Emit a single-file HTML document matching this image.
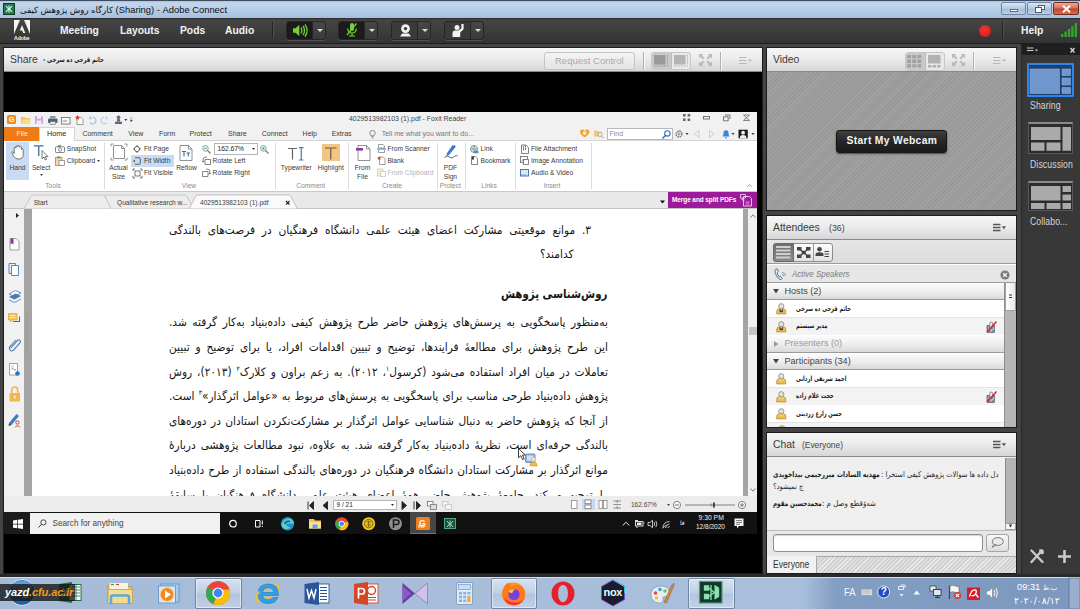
<!DOCTYPE html>
<html lang="fa">
<head>
<meta charset="utf-8">
<title>Adobe Connect</title>
<style>
*{box-sizing:border-box;margin:0;padding:0}
html,body{width:1080px;height:609px;overflow:hidden;background:#444}
body{position:relative;font-family:"Liberation Sans","DejaVu Sans",sans-serif;font-size:12px;color:#222}
.a{position:absolute}
.t{position:absolute;white-space:nowrap;line-height:1}
svg{position:absolute;overflow:visible}
/* ---------- window title bar ---------- */
#wtitle{left:0;top:0;width:1080px;height:18px;background:linear-gradient(#a9c0dd 0,#c4d6ec 12%,#b3cbe6 60%,#a4bfdf 100%);border-top:1px solid #3f4d60}
#wtitle .txt{left:20px;top:3.5px;font-size:9.4px;color:#111;direction:ltr}
.wbtn{top:1px;height:13px;border:1px solid #6f87a6;border-radius:2px;background:linear-gradient(#dbe7f4,#b4c8e0 50%,#a3bad6 51%,#bccfe6)}
/* ---------- connect menu bar ---------- */
#mbar{left:0;top:18px;width:1080px;height:26px;background:linear-gradient(#2a2a2a 0,#454545 8%,#3b3b3b 60%,#333 100%);border-bottom:1px solid #1d1d1d}
#mbar .m{top:7.5px;font-size:10.3px;font-weight:bold;color:#f2f2f2}
.vsep{top:3.500px;width:2px;height:16.500px;background:#232323;border-right:1px solid #505050}
.mb{top:2.8px;width:40px;height:19px;border-radius:3px;background:linear-gradient(#474747,#3a3a3a);border:1px solid #262626;box-shadow:0 1px 0 #505050}
.mb i{position:absolute;left:0;top:0;bottom:0;width:26px;background:#1b1b1b;border-radius:2px 0 0 2px;border-right:1px solid #262626}
.mb b{position:absolute;left:30px;top:7px;width:0;height:0;border:3px solid transparent;border-top:3.5px solid #ddd;border-bottom:0}
/* ---------- pods ---------- */
.pod{background:#000;box-shadow:0 0 0 1px #1c1c1c}
.phead{height:24px;background:linear-gradient(#f6f6f6,#ececec 45%,#d6d6d6);border-bottom:1px solid #8a8a8a}
.ptitle{font-size:10.400px;color:#3a3a3a;margin-top:.5px}
.hsep{width:1px;height:18px;background:#b0b0b0;box-shadow:1px 0 0 #f8f8f8}
.tog{width:40px;height:18px;border:1px solid #c6c6c6;border-radius:3px;background:#e9e9e9}
.tog i{position:absolute;left:0;top:0;bottom:0;width:20px;background:#c9c9c9;border-right:1px solid #bdbdbd;border-radius:2px 0 0 2px}
.hatch{background:#999 repeating-linear-gradient(135deg,rgba(255,255,255,.10) 0,rgba(255,255,255,.10) 1px,transparent 1px,transparent 3px)}

/* ---------- foxit ---------- */
.r{position:absolute;white-space:nowrap;line-height:1;font-size:6.7px;color:#3a3a3a;margin-top:.9px}
.rc{position:absolute;white-space:nowrap;line-height:1;font-size:6.7px;color:#3a3a3a;transform:translateX(-50%);margin-top:.9px}
.g{color:#8a8a8a}
.rsep{position:absolute;top:143px;width:1px;height:46px;background:#dcdcdc}
.dl{position:absolute;direction:rtl;font-family:"DejaVu Sans",sans-serif;color:#151515;line-height:1.6;height:1.6em;white-space:nowrap;text-align:justify;text-align-last:justify;transform-origin:0 0;overflow:visible}
.dl sup{font-size:58%;line-height:0;vertical-align:.75em}
.nm{font-family:"DejaVu Sans Condensed","DejaVu Sans",sans-serif;font-size:7.200px;font-weight:bold;color:#1c1c1c;transform:scaleX(.79);transform-origin:0 0}
.cn{font-family:"DejaVu Sans Condensed","DejaVu Sans",sans-serif;font-size:7.800px;font-weight:bold;color:#1c1c1c;transform:scaleX(.83);transform-origin:0 0}
.cm{font-family:"DejaVu Sans Condensed","DejaVu Sans",sans-serif;font-size:7.800px;color:#2a2a2a;transform:scaleX(.96);transform-origin:0 0}
.lb{font-size:10px;color:#d6d6d6;transform:scaleX(.87);transform-origin:0 0;letter-spacing:.1px}
.tb{top:578px;height:31px;border:1px solid #6f86a6;border-radius:2px;background:linear-gradient(rgba(255,255,255,.55),rgba(255,255,255,.28) 48%,rgba(255,255,255,.12) 52%,rgba(255,255,255,.30));box-shadow:inset 0 0 0 1px rgba(255,255,255,.5)}
</style>
</head>
<body>

<!-- ======= Windows title bar ======= -->
<div id="wtitle" class="a">
  <div class="a" style="left:3px;top:2px;width:12px;height:12px;background:#1f7a50;border:1px solid #0c3a25"></div>
  <svg style="left:4px;top:3px" width="10" height="10" viewBox="0 0 10 10"><path d="M2 2L4.5 5L2 8M8 2L5.5 5L8 8M5 1.5V8.5" stroke="#e8f5ee" stroke-width="1.1" fill="none"/></svg>
  <div class="t txt"><span dir="rtl" style="font-size:8.6px">کارگاه روش پژوهش کیفی</span> (Sharing) - Adobe Connect</div>
  <div class="a wbtn" style="left:1001px;width:25px"><div class="a" style="left:8px;top:6px;width:8px;height:3px;background:#fff;border:1px solid #5b6c85"></div></div>
  <div class="a wbtn" style="left:1027px;width:25px"><div class="a" style="left:10px;top:2px;width:7px;height:5px;border:1px solid #4b5c75;background:#fff"></div><div class="a" style="left:7px;top:4px;width:7px;height:6px;border:1px solid #4b5c75;background:#fff"></div></div>
  <div class="a wbtn" style="left:1053px;width:26px;background:linear-gradient(#eaa998,#d66f5b 48%,#c4432d 52%,#d9694b);border-color:#6d3029"><svg style="left:8px;top:2px" width="9" height="8" viewBox="0 0 9 8"><path d="M1 .8L8 7.2M8 .8L1 7.2" stroke="#fff" stroke-width="2"/></svg></div>
</div>

<!-- ======= Adobe Connect menu bar ======= -->
<div id="mbar" class="a">
  <svg style="left:14px;top:2px" width="16" height="14" viewBox="0 0 16 14"><path d="M0 0H6L0 14ZM16 0H10L16 14ZM8 5L11.3 13H9.2L8.2 10.5H5.8Z" fill="#f4f4f4"/></svg>
  <div class="t" style="left:14px;top:18px;font-size:5.2px;font-weight:bold;color:#f4f4f4;letter-spacing:-.1px">Adobe</div>
  <div class="t m" style="left:60px">Meeting</div>
  <div class="t m" style="left:120px">Layouts</div>
  <div class="t m" style="left:180px">Pods</div>
  <div class="t m" style="left:225px">Audio</div>
  <div class="a vsep" style="left:272px"></div>
  <div class="a mb" style="left:286px"><i></i><b></b>
    <svg style="left:6px;top:2px" width="15" height="13" viewBox="0 0 15 13"><path d="M0 4.3H2.6L6.3.8V12.2L2.6 8.7H0Z" fill="#74cf3c"/><path d="M8 3.6Q9.8 6.5 8 9.4M10 1.9Q13.2 6.5 10 11.1M12 .5Q16.3 6.5 12 12.5" stroke="#74cf3c" stroke-width="1.3" fill="none"/></svg></div>
  <div class="a mb" style="left:338px"><i></i><b></b>
    <svg style="left:7px;top:1.5px" width="12" height="14" viewBox="0 0 12 14"><rect x="4" y="0" width="4" height="8" rx="2" fill="#74cf3c"/><path d="M1.8 5.5Q1.8 10 6 10Q10.2 10 10.2 5.5M6 10V13M3 13H9" stroke="#74cf3c" stroke-width="1.2" fill="none"/><path d="M10.5 .5L1 12" stroke="#74cf3c" stroke-width="1.2"/></svg></div>
  <div class="a mb" style="left:391px"><i style="background:#3a3a3a"></i><b></b>
    <svg style="left:7px;top:2px" width="13" height="13" viewBox="0 0 13 13"><circle cx="6.5" cy="4.6" r="4.4" fill="#f2f2f2"/><circle cx="6.5" cy="4.6" r="1.7" fill="#3a3a3a"/><path d="M3.2 9.4H9.8L12 12.5H1Z" fill="#f2f2f2"/></svg></div>
  <div class="a mb" style="left:444px"><i style="background:#3a3a3a"></i><b></b>
    <svg style="left:6px;top:1px" width="15" height="15" viewBox="0 0 15 15"><circle cx="6" cy="4.6" r="2.5" fill="#f2f2f2"/><path d="M1.5 14V10.2Q1.5 7.6 4.2 7.6H7.6L10.4 5.2V1H12.6V6.2L9.2 9.6V14Z" fill="#f2f2f2"/></svg></div>
  <div class="a" style="left:978.500px;top:6.800px;width:12.200px;height:12.200px;border-radius:50%;background:radial-gradient(circle at 45% 40%,#f03a33,#d81f1f 70%,#b81515)"></div>
  <div class="a vsep" style="left:1002px"></div>
  <div class="t m" style="left:1021px">Help</div>
  <svg style="left:1060px;top:5px" width="18" height="14" viewBox="0 0 18 14"><path d="M1 11H3.4V14H1ZM4.4 8.6H6.8V14H4.4ZM7.8 6H10.2V14H7.8ZM11.2 3.2H13.6V14H11.2ZM14.6 0H17V14H14.6Z" fill="#35a42e"/></svg>
</div>

<!-- ======= Share pod ======= -->
<div class="a pod" style="left:4px;top:48px;width:758px;height:525px"></div>
<div class="a phead" style="left:4px;top:48px;width:758px"></div>
<div class="t ptitle" style="left:10px;top:54.5px">Share</div>
<div class="t" style="left:43px;top:56.5px;font-family:'DejaVu Sans Condensed','DejaVu Sans',sans-serif;font-size:7px;font-weight:bold;color:#222;direction:ltr;transform:scaleX(.84);transform-origin:0 0">- <span dir="rtl">حاتم قرجی ده سرخی</span></div>
<div class="a" style="left:544px;top:52px;width:91px;height:17.5px;border:1px solid #c4c4c4;border-radius:3px;background:linear-gradient(#f4f4f4,#e4e4e4)"></div>
<div class="t" style="left:555px;top:55.5px;font-size:9.5px;color:#a9a9a9">Request Control</div>
<div class="a hsep" style="left:643px;top:52px"></div>
<div class="a tog" style="left:651px;top:52px"><i></i></div>
<svg style="left:654px;top:55px" width="34" height="12" viewBox="0 0 34 12"><rect x="0" y="0" width="11.5" height="9.5" fill="#9a9a9a"/><path d="M13.5 0V12M0 11H12" stroke="#9a9a9a" stroke-width="1" stroke-dasharray="1.5 1"/><rect x="20" y="0" width="11.5" height="9.5" fill="#b4b4b4"/><path d="M33.5 0V12M20 11H32" stroke="#b4b4b4" stroke-width="1" stroke-dasharray="1.5 1"/></svg>
<svg class="fs" style="left:699px;top:54px" width="13" height="12" viewBox="0 0 13 12"><path d="M0 0H4.5L3 1.5L5.5 4L4 5.5L1.5 3L0 4.5ZM13 0V4.5L11.5 3L9 5.5L7.5 4L10 1.5L8.5 0ZM0 12V7.5L1.5 9L4 6.5L5.5 8L3 10.5L4.5 12ZM13 12H8.5L10 10.5L7.5 8L9 6.5L11.5 9L13 7.5Z" fill="#bcbcbc"/></svg>
<div class="a hsep" style="left:720px;top:52px"></div>
<svg style="left:739px;top:57px" width="13" height="7" viewBox="0 0 13 7"><path d="M0 .5H7.5M0 3.5H7.5M0 6.5H7.5" stroke="#b8b8b8" stroke-width="1"/><path d="M9 2.5H13L11 5Z" fill="#b8b8b8"/></svg>

<!-- ======= Shared screen (Foxit Reader on Windows 10) ======= -->
<div id="scr" class="a" style="left:4px;top:112px;width:753px;height:422px;background:#fff;overflow:hidden"></div>

<!-- foxit: quick access + tabs -->
<div class="a" style="left:4px;top:112px;width:753px;height:29px;background:#f1f1f1;border-bottom:1px solid #d4d4d4"></div>
<div class="a" style="left:7px;top:115px;width:9px;height:9px;border-radius:1.5px;background:#f08a1c"></div>
<div class="t" style="left:9px;top:116px;font-size:7px;font-weight:bold;color:#fff">G</div>
<svg style="left:21px;top:115px" width="112" height="10" viewBox="0 0 112 10">
 <path d="M0 2H3.5L4.5 3H9V9H0Z" fill="#f4c44e"/><path d="M1.5 4.5H10L8.5 9H0Z" fill="#f8dc8c"/>
 <path d="M14 1H21L22 2V9H14Z" fill="#c9a8dc"/><rect x="16" y="1" width="4" height="2.6" fill="#f4f0f8"/><rect x="15.5" y="5.5" width="5" height="3.5" fill="#efe6f6"/>
 <rect x="27" y="3.5" width="9.5" height="4.5" rx="1" fill="#55606e"/><rect x="29" y="1" width="5.5" height="2.5" fill="#8b96a5"/><rect x="29" y="6.5" width="5.5" height="3" fill="#dfe3e8" stroke="#55606e" stroke-width=".5"/>
 <rect x="40.5" y="2.5" width="8.5" height="6.5" fill="#fafafa" stroke="#6a6a6a" stroke-width=".8"/><path d="M42 6H46" stroke="#6a6a6a" stroke-width=".8"/>
 <path d="M56 2.5H60.5L62 4V9.5H56Z" fill="#fff" stroke="#777" stroke-width=".7"/><path d="M56.5 0L57.3 1.6L59 1.9L57.7 3L58 4.7L56.5 3.9L55 4.7L55.3 3L54 1.9L55.7 1.6Z" fill="#e0341f"/>
 <path d="M69 7.5A3.3 3.3 0 1 0 72 2.2" fill="none" stroke="#a6c6ea" stroke-width="1.3"/><path d="M67.2 3.8L70.2 .8L70.8 4.6Z" fill="#a6c6ea"/>
 <path d="M86 7.5A3.3 3.3 0 1 1 83 2.2" fill="none" stroke="#bdd3ec" stroke-width="1.3"/><path d="M87.8 3.8L84.8 .8L84.2 4.6Z" fill="#bdd3ec"/>
 <circle cx="97.5" cy="2.3" r="1.8" fill="#5d6b7c"/><path d="M96.3 3.5H98.7L99.3 6.5H95.7ZM94 6.7H101V9H94Z" fill="#5d6b7c"/>
 <path d="M103.3 4H106.3L104.8 6Z" fill="#333"/><path d="M109.3 3H111.3M109.3 5H111.3L110.3 6.8Z" fill="#444" stroke="#444" stroke-width=".5"/>
</svg>
<div class="r" style="left:349px;top:115.5px;font-size:6.9px;color:#444">4029513982103 (1).pdf - Foxit Reader</div>
<svg style="left:683px;top:114px" width="68" height="8" viewBox="0 0 68 8"><path d="M0 0H2.6V2.6H0ZM4.6 0H7.2V2.6H4.6ZM0 4.4H2.6V7H0ZM4.6 4.4H7.2V7H4.6Z" fill="#666"/><rect x="20.5" y="2.5" width="6" height="2.5" fill="none" stroke="#666" stroke-width=".9"/><path d="M42 1H47V5M40.5 2.8H45.2V6.8H40.5Z" fill="none" stroke="#666" stroke-width=".9"/><path d="M60.5 1L66.5 6.5M66.5 1L60.5 6.5M60.5 1H66.5M60.5 6.5H66.5" stroke="#666" stroke-width=".8" fill="none"/></svg>
<div class="a" style="left:4px;top:127px;width:35px;height:13.5px;background:#ef7b14"></div>
<div class="r" style="left:16.5px;top:129.2px;font-size:7px;color:#ffe9d3">File</div>
<div class="a" style="left:39px;top:127px;width:36px;height:14.5px;background:#fff;border:1px solid #d4d4d4;border-bottom:0"></div>
<div class="r" style="left:47px;top:129.2px;font-size:7.2px;color:#222">Home</div>
<div class="r" style="left:82.4px;top:129.2px;font-size:7px">Comment</div>
<div class="r" style="left:128.3px;top:129.2px;font-size:7px">View</div>
<div class="r" style="left:158.9px;top:129.2px;font-size:7px">Form</div>
<div class="r" style="left:189.6px;top:129.2px;font-size:7px">Protect</div>
<div class="r" style="left:228px;top:129.2px;font-size:7px">Share</div>
<div class="r" style="left:261.7px;top:129.2px;font-size:7px">Connect</div>
<div class="r" style="left:302.6px;top:129.2px;font-size:7px">Help</div>
<div class="r" style="left:331.7px;top:129.2px;font-size:7px">Extras</div>
<svg style="left:368.5px;top:129.5px" width="7" height="9" viewBox="0 0 7 9"><circle cx="3.5" cy="3.2" r="2.7" fill="none" stroke="#777" stroke-width=".8"/><path d="M2.4 6.5H4.6M2.7 8H4.3" stroke="#777" stroke-width=".8"/></svg>
<div class="r g" style="left:381.7px;top:129.2px;font-size:7px;color:#777">Tell me what you want to do...</div>
<svg style="left:580px;top:129px" width="24" height="9" viewBox="0 0 24 9"><path d="M4.7 8.4C1 6 0 4.4 0 2.8C0 .6 3.2-.4 4.7 1.9C6.200-.4 9.400 .6 9.400 2.800C9.400 4.400 8.400 6 4.700 8.400Z" fill="#f3a033"/><circle cx="4.700" cy="4" r="1.900" fill="#fde8c8"/><path d="M14 1.500H17L17.800 2.500H21.500V7.500H14Z" fill="#f2c77a"/><circle cx="20" cy="5.500" r="2" fill="#f7f2ea" stroke="#999" stroke-width=".7"/><path d="M21.500 7L23.500 9" stroke="#999" stroke-width=".9"/></svg>
<div class="a" style="left:606.5px;top:127.5px;width:66.5px;height:12px;background:#fff;border:1px solid #b9b9b9"></div>
<div class="r g" style="left:609.5px;top:129.2px;font-size:7px;color:#8d8d8d">Find</div>
<svg style="left:662px;top:129.5px" width="9" height="9" viewBox="0 0 9 9"><circle cx="5.400" cy="3.400" r="2.700" fill="none" stroke="#2f74c4" stroke-width="1.100"/><path d="M3.400 5.500L.5 8.500" stroke="#2f74c4" stroke-width="1.500"/></svg>
<svg style="left:675px;top:129px" width="82" height="10" viewBox="0 0 82 10"><circle cx="4" cy="5" r="3" fill="none" stroke="#6f6f6f" stroke-width="1.300" stroke-dasharray="1.600 .75"/><circle cx="4" cy="5" r="1.100" fill="none" stroke="#6f6f6f" stroke-width=".7"/><path d="M10.500 4H13.500L12 6Z" fill="#333"/><path d="M24 1.500V8.500L19.500 5Z" fill="none" stroke="#c6c6c6" stroke-width=".8"/><path d="M34.500 1.500V8.500L39 5Z" fill="none" stroke="#c6c6c6" stroke-width=".8"/><path d="M47.500 7.500Q48.500 6 48.500 4Q48.500 1.200 51 1.200Q53.500 1.200 53.500 4Q53.500 6 54.500 7.500ZM50 8.300H52V9.300H50Z" fill="#3c86d8"/><path d="M56.500 4H59.500L58 6Z" fill="#333"/><rect x="63.500" y=".7" width="9.300" height="8.600" fill="#1c1c1c"/><circle cx="68.100" cy="3.700" r="1.900" fill="#f1f1f1"/><path d="M64.800 9.300Q64.800 6 68.100 6Q71.400 6 71.400 9.300Z" fill="#f1f1f1"/><path d="M76.500 4H79.500L78 6Z" fill="#333"/></svg>

<!-- foxit: ribbon -->
<div class="a" style="left:4px;top:141px;width:753px;height:50.5px;background:#fff;border-bottom:1px solid #c9c9c9"></div>
<div class="a" style="left:6px;top:142px;width:23px;height:38px;background:#c8dbf2"></div>
<svg style="left:10.500px;top:145px" width="14" height="15" viewBox="0 0 14 15"><path d="M3.200 8.500V3.200Q3.200 2.200 4.100 2.200Q5 2.200 5 3.200V1.700Q5 .7 5.900 .7Q6.800 .7 6.800 1.700V1.400Q6.800 .5 7.700 .5Q8.600 .5 8.600 1.400V2.300Q8.600 1.500 9.500 1.500Q10.400 1.500 10.400 2.400V4.500Q10.400 3.700 11.300 3.700Q12.200 3.700 12.200 4.600V9.500Q12.200 14 8 14H7Q4.500 14 3 11.500L1 8.200Q.5 7.200 1.400 6.900Q2.200 6.700 3.200 8.500Z" fill="#fff" stroke="#555" stroke-width=".8"/></svg>
<div class="rc" style="left:17.500px;top:164px">Hand</div>
<svg style="left:34px;top:145px" width="15" height="16" viewBox="0 0 15 16"><path d="M0 .8H9.500M4.750 .8V11" stroke="#3a6ea5" stroke-width="1.300" fill="none"/><path d="M8 5.500V14L10 12L11.300 15L12.500 14.500L11.200 11.600H14Z" fill="#fff" stroke="#444" stroke-width=".7"/></svg>
<div class="rc" style="left:41.200px;top:164px">Select</div>
<svg style="left:39.700px;top:173.500px" width="3" height="2" viewBox="0 0 3 2"><path d="M0 0H3L1.500 2Z" fill="#444"/></svg>
<svg style="left:55px;top:144.500px" width="10" height="8" viewBox="0 0 10 8"><rect x=".5" y="1.800" width="9" height="5.700" rx=".8" fill="none" stroke="#666" stroke-width=".8"/><rect x="3" y=".3" width="3" height="1.500" fill="#666"/><circle cx="5" cy="4.600" r="1.600" fill="none" stroke="#666" stroke-width=".7"/></svg>
<div class="r" style="left:66.700px;top:145.200px">SnapShot</div>
<svg style="left:55px;top:155.500px" width="10" height="10" viewBox="0 0 10 10"><rect x=".5" y="1.500" width="6.500" height="8" fill="#f1d9a8" stroke="#b8893a" stroke-width=".8"/><rect x="2.200" y=".3" width="3" height="2" fill="#888"/><rect x="4" y="4.500" width="5.500" height="5" fill="#fff" stroke="#777" stroke-width=".7"/></svg>
<div class="r" style="left:66.700px;top:157.200px">Clipboard</div>
<svg style="left:96.500px;top:160px" width="3" height="2" viewBox="0 0 3 2"><path d="M0 0H3L1.500 2Z" fill="#444"/></svg>
<div class="rc g" style="left:53px;top:182.200px">Tools</div>
<div class="rsep" style="left:103.500px"></div>
<svg style="left:110.500px;top:144px" width="16" height="16" viewBox="0 0 16 16"><path d="M2.500 1.500H10.500L13.500 4.500V14.500H2.500Z" fill="#fff" stroke="#777" stroke-width=".8"/><path d="M10.500 1.500V4.500H13.500" fill="none" stroke="#777" stroke-width=".8"/><path d="M0 2.500V0H2.500M16 2.500V0H13.500M0 13.500V16H2.500M16 13.500V16H13.500" stroke="#888" stroke-width=".9" fill="none"/></svg>
<div class="rc" style="left:118.500px;top:164px">Actual</div>
<div class="rc" style="left:118.500px;top:172.700px">Size</div>
<svg style="left:133px;top:144.500px" width="8" height="8" viewBox="0 0 8 8"><circle cx="4" cy="4" r="2.600" fill="none" stroke="#555" stroke-width=".9"/><path d="M4 0V1.400M4 6.600V8M0 4H1.400M6.600 4H8" stroke="#555" stroke-width=".9"/></svg>
<div class="r" style="left:144px;top:145.200px">Fit Page</div>
<div class="a" style="left:131px;top:154.500px;width:43px;height:12px;background:#c8dbf2"></div>
<svg style="left:133px;top:156.500px" width="8" height="8" viewBox="0 0 8 8"><path d="M2 .7H6Q7.300 .7 7.300 2V6Q7.300 7.300 6 7.300H2" fill="none" stroke="#555" stroke-width=".9"/><path d="M0 4L2 2.500V5.500Z" fill="#555"/></svg>
<div class="r" style="left:144px;top:157.200px">Fit Width</div>
<svg style="left:133px;top:168.500px" width="9" height="9" viewBox="0 0 9 9"><rect x="2" y="2" width="5" height="5" fill="none" stroke="#555" stroke-width=".8"/><path d="M0 2V0H2M9 2V0H7M0 7V9H2M9 7V9H7" stroke="#555" stroke-width=".8" fill="none"/></svg>
<div class="r" style="left:144px;top:169.300px">Fit Visible</div>
<svg style="left:179px;top:144.500px" width="14" height="16" viewBox="0 0 14 16"><path d="M1 .5H9.500L13 4V15.500H1Z" fill="#fff" stroke="#777" stroke-width=".8"/><path d="M9.500 .5V4H13" fill="none" stroke="#777" stroke-width=".8"/><path d="M3 6.500H7M5 6.500V11.500M7.500 8H11M9.250 8V11.500" stroke="#3a6ea5" stroke-width="1.100" fill="none"/></svg>
<div class="rc" style="left:186.500px;top:164px">Reflow</div>
<svg style="left:202px;top:144.500px" width="9" height="9" viewBox="0 0 9 9"><circle cx="3.400" cy="3.400" r="2.800" fill="#eef7f0" stroke="#5a9a74" stroke-width=".8"/><path d="M2 3.400H4.800" stroke="#5a9a74" stroke-width=".8"/><path d="M5.500 5.500L8.500 8.500" stroke="#777" stroke-width="1.200"/></svg>
<div class="a" style="left:214px;top:143px;width:43.500px;height:11.800px;background:#fff;border:1px solid #b5b5b5"></div>
<div class="r" style="left:217.500px;top:145.400px;color:#222">162.67%</div>
<svg style="left:251.500px;top:147.500px" width="3" height="2" viewBox="0 0 3 2"><path d="M0 0H3L1.500 2Z" fill="#333"/></svg>
<svg style="left:260px;top:144.500px" width="9" height="9" viewBox="0 0 9 9"><circle cx="3.400" cy="3.400" r="2.800" fill="#eef7f0" stroke="#5a9a74" stroke-width=".8"/><path d="M2 3.400H4.800M3.400 2V4.800" stroke="#5a9a74" stroke-width=".8"/><path d="M5.500 5.500L8.500 8.500" stroke="#777" stroke-width="1.200"/></svg>
<svg style="left:202px;top:156px" width="9" height="9" viewBox="0 0 9 9"><path d="M3 3.500H8.500V8.500H3Z" fill="#fff" stroke="#666" stroke-width=".8"/><path d="M1.200 6V3.200Q1.200 1.200 3.500 1.200H5" fill="none" stroke="#666" stroke-width=".8"/><path d="M0 5L1.200 6.800L2.400 5Z" fill="#666"/></svg>
<div class="r" style="left:212.600px;top:157.200px">Rotate Left</div>
<svg style="left:202px;top:168px" width="9" height="9" viewBox="0 0 9 9"><path d="M.5 3.500H6V8.500H.5Z" fill="#fff" stroke="#666" stroke-width=".8"/><path d="M7.800 6V3.200Q7.800 1.200 5.500 1.200H4" fill="none" stroke="#666" stroke-width=".8"/><path d="M6.600 5L7.800 6.800L9 5Z" fill="#666"/></svg>
<div class="r" style="left:212.600px;top:169.300px">Rotate Right</div>
<div class="rc g" style="left:189px;top:182.200px">View</div>
<div class="rsep" style="left:274.500px"></div>
<svg style="left:288px;top:146.500px" width="17" height="14" viewBox="0 0 17 14"><path d="M0 1.500H9M4.500 1.500V12.500" stroke="#666" stroke-width="1.200" fill="none"/><path d="M11 .6H15.500M11 13H15.500M13.250 .6V13" stroke="#3b7cc4" stroke-width="1.200" fill="none"/></svg>
<div class="rc" style="left:296.300px;top:164px">Typewriter</div>
<div class="a" style="left:321.800px;top:144px;width:18px;height:17px;background:#f3c582"></div>
<svg style="left:325px;top:146.500px" width="12" height="13" viewBox="0 0 12 13"><path d="M0 1H11.500M5.750 1V12.500" stroke="#6a5a45" stroke-width="1.200" fill="none"/></svg>
<div class="rc" style="left:330.800px;top:164px">Highlight</div>
<div class="rc g" style="left:310.700px;top:182.200px">Comment</div>
<div class="rsep" style="left:348.300px"></div>
<svg style="left:355.500px;top:144.500px" width="15" height="16" viewBox="0 0 15 16"><path d="M2 .5H10.500L14 4V15.500H2Z" fill="#fff" stroke="#777" stroke-width=".8"/><path d="M10.500 .5V4H14" fill="none" stroke="#777" stroke-width=".8"/><rect x="0" y="3" width="7" height="2.600" fill="#8a3aa8"/></svg>
<div class="rc" style="left:362.500px;top:164px">From</div>
<div class="rc" style="left:362.500px;top:172.700px">File</div>
<svg style="left:377px;top:144px" width="9" height="9" viewBox="0 0 9 9"><path d="M1.500 .5H6L7.500 2V4H1.500Z" fill="#fff" stroke="#777" stroke-width=".7"/><path d="M0 5H9" stroke="#3b7cc4" stroke-width="1"/><path d="M1.500 6V8.500H7.500V6" fill="none" stroke="#777" stroke-width=".7"/></svg>
<div class="r" style="left:387.400px;top:145.200px">From Scanner</div>
<svg style="left:377px;top:156px" width="9" height="9" viewBox="0 0 9 9"><path d="M2.500 1H6.500L8 2.500V8.500H2.500Z" fill="#fff" stroke="#777" stroke-width=".7"/><path d="M2.200 0L2.800 1.400L4.300 1.600L3.200 2.600L3.500 4L2.200 3.300L.9 4L1.200 2.600L.1 1.600L1.600 1.400Z" fill="#e0341f"/></svg>
<div class="r" style="left:387.400px;top:157.200px">Blank</div>
<svg style="left:377px;top:168px" width="9" height="9" viewBox="0 0 9 9" opacity=".45"><rect x=".5" y="1" width="5.500" height="7" fill="#f1d9a8" stroke="#b8893a" stroke-width=".7"/><rect x="3.500" y="3.500" width="5" height="5" fill="#fff" stroke="#777" stroke-width=".7"/></svg>
<div class="r" style="left:387.400px;top:169.300px;color:#b4b4b4">From Clipboard</div>
<div class="rc g" style="left:392px;top:182.200px">Create</div>
<div class="rsep" style="left:436.500px"></div>
<svg style="left:444px;top:144.500px" width="14" height="16" viewBox="0 0 14 16"><path d="M8.500 0L11.500 2L5 10L2.500 11L3 8.200Z" fill="#3b7cc4"/><path d="M9.800 .8L11.300 1.800" stroke="#1d4f8c" stroke-width="1.200"/><path d="M.5 12.500Q3 9.500 5.500 12Q8 14.500 10.500 11.500Q12 10 13.500 11" fill="none" stroke="#3a5a8a" stroke-width=".9"/></svg>
<div class="rc" style="left:450.400px;top:164px">PDF</div>
<div class="rc" style="left:450.400px;top:172.700px">Sign</div>
<div class="rc g" style="left:450.400px;top:182.200px">Protect</div>
<div class="rsep" style="left:464.500px"></div>
<svg style="left:469.500px;top:144.500px" width="9" height="9" viewBox="0 0 9 9"><circle cx="4" cy="4" r="3.500" fill="#eaf4ee" stroke="#5a8a74" stroke-width=".8"/><path d="M.5 4H7.500M4 .5Q1.500 4 4 7.500M4 .5Q6.500 4 4 7.500" fill="none" stroke="#5a8a74" stroke-width=".6"/><path d="M4.500 6.200H8.500M4.500 7.800H8.500" stroke="#3b6cb4" stroke-width="1.100"/></svg>
<div class="r" style="left:480.500px;top:145.200px">Link</div>
<svg style="left:470.500px;top:156px" width="7" height="9" viewBox="0 0 7 9"><path d="M.5 .5H4.500L6.500 2.500V8.500H.5Z" fill="#fff" stroke="#666" stroke-width=".8"/><path d="M1 .5H3V4L2 3.200L1 4Z" fill="#444"/></svg>
<div class="r" style="left:480.500px;top:157.200px">Bookmark</div>
<div class="rc g" style="left:489px;top:182.200px">Links</div>
<div class="rsep" style="left:514.500px"></div>
<svg style="left:520.500px;top:144px" width="8" height="10" viewBox="0 0 8 10"><path d="M.5 1H5L7.500 3.500V9.500H.5Z" fill="#fff" stroke="#666" stroke-width=".8"/><path d="M2.500 6.500V2.500Q2.500 1.500 3.500 1.500Q4.500 1.500 4.500 2.500V6" fill="none" stroke="#3b6cb4" stroke-width=".8"/></svg>
<div class="r" style="left:531px;top:145.200px">File Attachment</div>
<svg style="left:520px;top:156px" width="9" height="9" viewBox="0 0 9 9"><rect x=".5" y=".5" width="7" height="6" fill="#fff" stroke="#666" stroke-width=".8"/><rect x="3.500" y="3.500" width="5" height="5" fill="#fff" stroke="#666" stroke-width=".8"/><path d="M1.500 5.500L3 3.500L4 4.800" fill="none" stroke="#5a8a74" stroke-width=".7"/></svg>
<div class="r" style="left:531px;top:157.200px">Image Annotation</div>
<svg style="left:520px;top:168.500px" width="9" height="8" viewBox="0 0 9 8"><rect x=".5" y=".5" width="8" height="6.500" fill="#d9e8f8" stroke="#3b6cb4" stroke-width=".9"/><path d="M1.500 6H2.500M3.500 6H4.500M5.500 6H6.500" stroke="#3b6cb4" stroke-width=".9"/></svg>
<div class="r" style="left:531px;top:169.300px">Audio &amp; Video</div>
<div class="rc g" style="left:552px;top:182.200px">Insert</div>
<div class="rsep" style="left:590.500px"></div>
<svg style="left:746.500px;top:183.500px" width="5" height="3" viewBox="0 0 5 3"><path d="M.3 2.800L2.500 .5L4.700 2.800" fill="none" stroke="#888" stroke-width=".8"/></svg>

<!-- foxit: document tab strip -->
<div class="a" style="left:4px;top:192px;width:753px;height:16.500px;background:#e9e9e9;border-bottom:1px solid #c4c4c4"></div>
<svg style="left:4px;top:192px" width="753" height="17" viewBox="0 0 753 17">
 <path d="M20 16.500L27 4.500Q28 3 30 3H98Q100 3 101 4.500L108 16.500" fill="#ededed" stroke="#bdbdbd" stroke-width=".8"/>
 <path d="M107 16.500L101 4.500Q100.500 3 103 3H180Q182 3 183 4.500L189 16.500" fill="#ededed" stroke="#bdbdbd" stroke-width=".8"/>
 <path d="M185 17L191.500 4.500Q192.500 3 194.500 3H284Q286 3 287 4.500L293.500 17Z" fill="#fafafa" stroke="#b4b4b4" stroke-width=".8"/>
 <path d="M282 9L285.500 12.500M285.500 9L282 12.500" stroke="#222" stroke-width="1.100"/>
 <path d="M656 8.500H661L658.500 11.500Z" fill="#111"/>
</svg>
<div class="r" style="left:33.700px;top:199px;font-size:6.600px">Start</div>
<div class="r" style="left:117px;top:199px;font-size:6.600px">Qualitative research w...</div>
<div class="r" style="left:200px;top:199px;font-size:6.600px">4029513982103 (1).pdf</div>
<div class="a" style="left:667.800px;top:191.700px;width:89.200px;height:16.800px;background:#9d1a9b"></div>
<div class="t" style="left:672px;top:196px;font-size:7.800px;font-weight:bold;color:#fff;transform:scaleX(.83);transform-origin:0 0;letter-spacing:-.1px">Merge and split PDFs</div>
<svg style="left:740px;top:194px" width="13" height="13" viewBox="0 0 13 13"><path d="M3.500 2.500H9.500L11.500 4.500V12H3.500Z" fill="none" stroke="#f0d8f0" stroke-width=".9"/><path d="M.5 .5H5.500V4H.5ZM2 4V6H4.500" fill="none" stroke="#f0d8f0" stroke-width=".8"/><path d="M5.500 8H9.500M5.500 10H9.500" stroke="#f0d8f0" stroke-width=".7"/></svg>

<!-- foxit: nav pane, page, scrollbar -->
<div class="a" style="left:4px;top:208.500px;width:20px;height:287px;background:#f1f1f1"></div>
<div class="a" style="left:24px;top:208.500px;width:8px;height:287px;background:#a4a4a4"></div>
<div class="a" style="left:743px;top:208.500px;width:5px;height:287px;background:#a4a4a4"></div>
<div class="a" style="left:748px;top:208.500px;width:9px;height:287px;background:#f0f0f0"></div>
<div class="a" style="left:748.500px;top:327px;width:8px;height:8px;background:#c4c4c4"></div>
<svg style="left:749.500px;top:214px" width="6" height="4" viewBox="0 0 6 4"><path d="M.5 3.500L3 .8L5.500 3.500" fill="none" stroke="#666" stroke-width=".9"/></svg>
<svg style="left:749.500px;top:488px" width="6" height="4" viewBox="0 0 6 4"><path d="M.5 .5L3 3.200L5.500 .5" fill="none" stroke="#666" stroke-width=".9"/></svg>
<svg style="left:26px;top:315px" width="2" height="40" viewBox="0 0 2 40"><path d="M1 0V40" stroke="#8a8a8a" stroke-width="1" stroke-dasharray="1 1.500"/></svg>
<svg style="left:15.500px;top:213px" width="3" height="5" viewBox="0 0 3 5"><path d="M0 0L3 2.500L0 5Z" fill="#222"/></svg>
<svg style="left:8px;top:236px" width="14" height="192" viewBox="0 0 14 192">
 <path d="M2 2.500H8L11 5.500V14H2Z" fill="#fff" stroke="#8a8a8a" stroke-width=".8"/><path d="M2.500 2.500H5.500V8.500L4 7.300L2.500 8.500Z" fill="#8f2ea8"/>
 <path d="M1 27.500H7.500V37.500H1Z" fill="#e8f0fa" stroke="#4b7ab8" stroke-width=".9"/><path d="M3.500 29.500H10.500V39.500H3.500Z" fill="#fff" stroke="#4b7ab8" stroke-width=".9"/>
 <path d="M1 58L7.500 54.500L13 57L6.500 60.500Z" fill="#fff" stroke="#4b7ab8" stroke-width=".8"/><path d="M1 61L7.500 57.500L13 60L6.500 63.500Z" fill="#4b7ab8"/><path d="M1 64L6.500 66.500L13 63" fill="none" stroke="#4b7ab8" stroke-width=".8"/>
 <path d="M.5 77.500H9V84H4L2.500 86V84H.5Z" fill="#f6c35a" stroke="#d29a2e" stroke-width=".6"/><path d="M5 85.500H11.500V80.500" fill="none" stroke="#666" stroke-width="1.100"/><path d="M2 79.500H7.500M2 81.500H7.500" stroke="#fff5dc" stroke-width=".7"/>
 <path d="M3 112L9.500 104.500Q11 103 12 104.500Q13 106 11.500 107.500L5.500 114Q3.500 116 2 114Q.5 112 2.500 110L8 104" fill="none" stroke="#4b7ab8" stroke-width="1.100"/>
 <path d="M1.500 127.500H9.500V139H1.500Z" fill="#fff" stroke="#8a8a8a" stroke-width=".8"/><path d="M3 130H6M3 132H5" stroke="#999" stroke-width=".6"/><circle cx="9.500" cy="137.500" r="2.300" fill="#2f74c4"/><path d="M4 133.500Q5 131.500 6 133.500T7.500 133" stroke="#444" stroke-width=".6" fill="none"/>
 <path d="M1.500 157H12V165.500H1.500Z" fill="#f3b64e"/><path d="M3.800 157V154Q3.800 151 6.750 151Q9.700 151 9.700 154V157" fill="none" stroke="#f3b64e" stroke-width="1.600"/><rect x="6" y="159.500" width="1.500" height="3" fill="#fdf0d4"/>
 <path d="M1 187L8.500 178L11 180L3.500 189Z" fill="#3b7cc4"/><path d="M.5 190L1 187L3.500 189Z" fill="#444"/><circle cx="9.500" cy="186.500" r="1.700" fill="none" stroke="#c0392b" stroke-width=".9"/><path d="M7 191.500Q9.500 188 12 191.500" fill="none" stroke="#c0392b" stroke-width=".9"/>
</svg>

<!-- foxit: document text -->
<div class="a" style="left:32px;top:208.5px;width:711px;height:287px;overflow:hidden;background:#fff"><div class="a" style="left:-32px;top:-208.5px;width:1080px;height:609px">
<div class="dl" style="left:169.0px;top:221.1px;width:458.7px;font-size:11.5px;transform:scaleX(0.92);">۳. موانع موقعیتی مشارکت اعضای هیئت علمی دانشگاه فرهنگیان در فرصت‌های بالندگی</div>
<div class="dl" style="left:539.5px;top:245.1px;width:36.4px;font-size:11.5px;transform:scaleX(0.92);text-align:right;text-align-last:right;">کدامند؟</div>
<div class="dl" style="left:501.0px;top:284.2px;width:128.9px;font-size:12.4px;transform:scaleX(0.826);font-weight:bold;text-align:right;text-align-last:right;">روش‌شناسی پژوهش</div>
<div class="dl" style="left:168.7px;top:313.4px;width:477.0px;font-size:11.5px;transform:scaleX(0.92);">به‌منظور پاسخگویی به پرسش‌های پژوهش حاضر طرح پژوهش کیفی داده‌بنیاد به‌کار گرفته شد.</div>
<div class="dl" style="left:168.7px;top:338.0px;width:477.0px;font-size:11.5px;transform:scaleX(0.92);">این طرح پژوهش برای مطالعهٔ فرایندها، توضیح و تبیین اقدامات افراد، یا برای توضیح و تبیین</div>
<div class="dl" style="left:168.7px;top:362.6px;width:477.0px;font-size:11.5px;transform:scaleX(0.92);">تعاملات در میان افراد استفاده می‌شود (کرسول<sup>۱</sup>، ۲۰۱۲). به زعم براون و کلارک<sup>۲</sup> (۲۰۱۳)، روش</div>
<div class="dl" style="left:168.7px;top:387.2px;width:477.0px;font-size:11.5px;transform:scaleX(0.92);">پژوهش داده‌بنیاد طرحی مناسب برای پاسخگویی به پرسش‌های مربوط به «عوامل اثرگذار»<sup>۳</sup> است.</div>
<div class="dl" style="left:168.7px;top:411.8px;width:477.0px;font-size:11.5px;transform:scaleX(0.92);">از آنجا که پژوهش حاضر به دنبال شناسایی عوامل اثرگذار بر مشارکت‌نکردن استادان در دوره‌های</div>
<div class="dl" style="left:168.7px;top:436.4px;width:477.0px;font-size:11.5px;transform:scaleX(0.92);">بالندگی حرفه‌ای است، نظریهٔ داده‌بنیاد به‌کار گرفته شد. به علاوه، نبود مطالعات پژوهشی دربارهٔ</div>
<div class="dl" style="left:168.7px;top:461.0px;width:477.0px;font-size:11.5px;transform:scaleX(0.92);">موانع اثرگذار بر مشارکت استادان دانشگاه فرهنگیان در دوره‌های بالندگی استفاده از طرح داده‌بنیاد</div>
<div class="dl" style="left:168.7px;top:485.6px;width:477.0px;font-size:11.5px;transform:scaleX(0.92);">را توجیه می‌کند. جامعهٔ پژوهش حاضر همهٔ اعضای هیئت علمی دانشگاه فرهنگیان با سابقهٔ</div>
</div></div>

<!-- mouse cursor + sharing badge -->
<svg style="left:518px;top:447.500px" width="20" height="19" viewBox="0 0 20 19"><path d="M.5 .5V9.800L2.800 7.700L4.600 11.600L6.200 10.900L4.500 7.100H7.500Z" fill="#fff" stroke="#111" stroke-width=".8"/><rect x="7.500" y="6" width="9.500" height="8.500" rx="1" fill="#8fb2dc" stroke="#5a7eaa" stroke-width=".8"/><rect x="9" y="7.500" width="6.500" height="5" fill="#cfe2f6"/><circle cx="15.500" cy="11.500" r="2.200" fill="#efe6d8" stroke="#b49a6a" stroke-width=".5"/><path d="M11.800 18Q11.800 14 15.500 14Q19.200 14 19.200 18Z" fill="#f2b94a" stroke="#c8902a" stroke-width=".5"/></svg>

<!-- foxit: status bar -->
<div class="a" style="left:4px;top:495.500px;width:753px;height:16.500px;background:#ececec"></div>
<svg style="left:308px;top:500.500px" width="145" height="9" viewBox="0 0 145 9">
 <path d="M0 .5V8.500M5.500 .5V8.500L1.500 4.500ZM19.500 .5V8.500L15 4.500Z" fill="#222" stroke="#222" stroke-width=".9"/>
 <path d="M94 .5V8.500L98.500 4.500ZM106 .5V8.500M108.500 .5V8.500L112.500 4.500Z" fill="#222" stroke="#222" stroke-width=".9"/>
 <rect x="119.500" y=".5" width="5.500" height="4.500" fill="#fff" stroke="#3b7cc4" stroke-width=".8"/><rect x="122.500" y="3.500" width="6" height="5" fill="#dcdcdc" stroke="#777" stroke-width=".8"/>
 <rect x="134.500" y=".5" width="5.500" height="4.500" fill="#f4f4f4" stroke="#c4c4c4" stroke-width=".8"/><rect x="137.500" y="3.500" width="6" height="5" fill="#f4f4f4" stroke="#c4c4c4" stroke-width=".8"/>
</svg>
<div class="a" style="left:333px;top:499.500px;width:64px;height:10.500px;background:#fff;border:1px solid #b4b4b4"></div>
<div class="r" style="left:336.500px;top:500.800px;font-size:6.500px;color:#222">9 / 21</div>
<svg style="left:391px;top:504px" width="3" height="2" viewBox="0 0 3 2"><path d="M0 0H3L1.500 2Z" fill="#333"/></svg>
<div class="a" style="left:581.500px;top:498.500px;width:13.500px;height:11.500px;background:#c8dbf2"></div>
<svg style="left:571px;top:500px" width="52" height="9" viewBox="0 0 52 9">
 <rect x=".5" y=".5" width="5.500" height="8" fill="#fff" stroke="#888" stroke-width=".8"/>
 <rect x="14" y="0" width="6" height="3.700" fill="#fff" stroke="#777" stroke-width=".8"/><rect x="14" y="5" width="6" height="3.700" fill="#fff" stroke="#777" stroke-width=".8"/>
 <rect x="28" y=".5" width="3.600" height="8" fill="#fff" stroke="#888" stroke-width=".8"/><rect x="32.400" y=".5" width="3.600" height="8" fill="#fff" stroke="#888" stroke-width=".8"/>
 <path d="M42.500 1H50M46.250 0V3M42.500 4.500H50M42.500 8H50M46.250 6V9" stroke="#777" stroke-width=".8"/>
</svg>
<div class="r" style="left:631px;top:500.800px;font-size:6.500px;color:#444">162.67%</div>
<svg style="left:667px;top:499.500px" width="80" height="10" viewBox="0 0 80 10">
 <path d="M0 4H3L1.500 6Z" fill="#444"/>
 <circle cx="10" cy="5" r="3.600" fill="#fafafa" stroke="#666" stroke-width=".8"/><path d="M8 5H12" stroke="#666" stroke-width=".9"/>
 <path d="M18 5H68" stroke="#666" stroke-width=".8"/><path d="M44 3.500V6.500" stroke="#666" stroke-width=".7"/><rect x="46" y="2.500" width="1.800" height="5" fill="#333"/>
 <circle cx="75" cy="5" r="3.600" fill="#fafafa" stroke="#666" stroke-width=".8"/><path d="M73 5H77M75 3V7" stroke="#666" stroke-width=".9"/>
</svg>

<!-- windows 10 taskbar inside shared screen -->
<div class="a" style="left:4px;top:512px;width:753px;height:22px;background:#121212"></div>
<div class="a" style="left:4px;top:512px;width:26px;height:22px;background:#1c1c1c"></div>
<svg style="left:12.500px;top:518.700px" width="10" height="10" viewBox="0 0 10 10"><path d="M0 1.400L4.300 .8V4.700H0ZM5 .7L10 0V4.700H5ZM0 5.400H4.300V9.300L0 8.700ZM5 5.400H10V10L5 9.300Z" fill="#fff"/></svg>
<div class="a" style="left:30px;top:512.500px;width:190px;height:21px;background:#f1f1f1"></div>
<svg style="left:37.500px;top:519px" width="9" height="9" viewBox="0 0 9 9"><circle cx="5.400" cy="3.400" r="2.600" fill="none" stroke="#333" stroke-width=".9"/><path d="M3.500 5.300L.5 8.500" stroke="#333" stroke-width="1"/></svg>
<div class="t" style="left:52.500px;top:519.500px;font-size:8.200px;color:#444">Search for anything</div>
<svg style="left:229px;top:516px" width="232" height="15" viewBox="0 0 232 15">
 <circle cx="4" cy="7.700" r="3.300" fill="none" stroke="#fff" stroke-width="1.200"/>
 <path d="M26.500 4.500H31V11H26.500ZM33.300 4.500V8.500M33.300 10V11" fill="none" stroke="#fff" stroke-width="1"/>
 <circle cx="58.500" cy="7.700" r="6.700" fill="#1f8fd6"/><path d="M52.500 9.500Q53.500 3 59.500 2.500Q64.500 3 65 7.500H57Q57.500 11 61.500 11.500Q57 14.500 53.500 11.500Z" fill="#5fd0c0"/><path d="M55.500 8Q57 4.500 61 5.500" stroke="#0c5aa0" stroke-width="1.500" fill="none"/>
 <path d="M80 3H85L86 4.500H92V12.500H80Z" fill="#f5c451"/><path d="M80 6H92V12.500H80Z" fill="#ffe08a"/><rect x="83.500" y="8.500" width="5" height="4" fill="#58a6e8"/>
 <circle cx="112.700" cy="7.700" r="6.500" fill="#e8453c"/><path d="M112.700 7.700L107 4.500A6.500 6.500 0 0 0 110.500 13.800Z" fill="#34a853"/><path d="M112.700 7.700L110.500 13.800A6.500 6.500 0 0 0 119 5.500Z" fill="#fbbc05"/><circle cx="112.700" cy="7.700" r="3" fill="#fff"/><circle cx="112.700" cy="7.700" r="2.300" fill="#4285f4"/>
 <circle cx="139.700" cy="7.700" r="6.500" fill="#f4c81c"/><circle cx="139.700" cy="7.700" r="4.200" fill="none" stroke="#7a5a10" stroke-width="1"/><path d="M137.500 6H142M137.500 9H142M139.700 4.500V11" stroke="#7a5a10" stroke-width=".9"/>
 <circle cx="166.500" cy="7.700" r="6.500" fill="#8e8e8e"/><path d="M164.500 12V4H167.500Q170 4 170 6.300Q170 8.600 167.500 8.600H164.500" fill="none" stroke="#1a1a1a" stroke-width="1.500"/>
</svg>
<div class="a" style="left:409.500px;top:512px;width:26.500px;height:22px;background:#474747;border-bottom:1px solid #6a7686"></div>
<div class="a" style="left:415.500px;top:517px;width:14.500px;height:13px;background:#ef7f1e;border-radius:1.500px"></div>
<div class="t" style="left:419px;top:518.500px;font-size:8.500px;font-weight:bold;color:#fff">G</div>
<div class="t" style="left:418.500px;top:526px;font-size:3.500px;font-weight:bold;color:#ffe">PDF</div>
<div class="a" style="left:443.700px;top:517.500px;width:12.600px;height:11.500px;background:#15553a;border:1px solid #58a684"></div>
<svg style="left:446px;top:519.500px" width="8" height="8" viewBox="0 0 8 8"><path d="M1 1L3.500 4L1 7M7 1L4.500 4L7 7M4 .5V7.500" stroke="#bfe6d2" stroke-width=".9" fill="none"/></svg>
<svg style="left:622px;top:517px" width="124" height="13" viewBox="0 0 124 13">
 <path d="M.8 8.500L4 5.200L7.200 8.500" fill="none" stroke="#eee" stroke-width="1"/>
 <rect x="13.500" y="4.500" width="7.500" height="4.500" fill="none" stroke="#eee" stroke-width=".9"/><path d="M13 3.500H16M21.500 6H22.500M15 9.500V11" stroke="#eee" stroke-width=".9"/><rect x="15" y="5.500" width="4.500" height="2.500" fill="#eee"/>
 <path d="M26 5.500H28L30.500 3.200V10.800L28 8.500H26Z" fill="none" stroke="#eee" stroke-width=".8"/><path d="M32 5Q33.300 7 32 9M33.800 3.800Q35.800 7 33.800 10.200" fill="none" stroke="#eee" stroke-width=".8"/>
 <path d="M41 11Q41 5 47.500 4.500M43.500 11Q43.500 7.500 47.500 7M46 11Q46 9.500 47.500 9.500" fill="none" stroke="#ddd" stroke-width=".9"/><path d="M40.500 11.500L44 8" stroke="#ddd" stroke-width=".7"/>
 <path d="M112.500 1.500H121.500V9H117L115 11.500V9H112.500Z" fill="#f4f4f4"/><path d="M114 3.500H120M114 5.500H120M114 7.300H118" stroke="#333" stroke-width=".6"/>
</svg>
<div class="t" style="left:680px;top:520px;font-size:6px;color:#eee;font-family:'DejaVu Sans',sans-serif" dir="rtl">فا</div>
<div class="t" style="left:698.500px;top:514.800px;font-size:6.800px;color:#f0f0f0">9:30 PM</div>
<div class="t" style="left:696px;top:524.200px;font-size:6.500px;color:#f0f0f0">12/8/2020</div>

<!-- ======= Video pod ======= -->
<div class="a pod hatch" style="left:767px;top:48px;width:249px;height:162px"></div>
<div class="a phead" style="left:767px;top:48px;width:249px"></div>
<div class="t ptitle" style="left:773px;top:54.500px">Video</div>
<div class="a tog" style="left:904.500px;top:51.500px;height:19px"><i></i></div>
<svg style="left:907px;top:54.500px" width="36" height="13" viewBox="0 0 36 13"><path d="M0 0H4V3.300H0ZM5.200 0H9.200V3.300H5.200ZM10.400 0H14.400V3.300H10.400ZM0 4.600H4V7.900H0ZM5.200 4.600H9.200V7.900H5.200ZM10.400 4.600H14.400V7.900H10.400ZM0 9.200H4V12.500H0ZM5.200 9.200H9.200V12.500H5.200ZM10.400 9.200H14.400V12.500H10.400Z" fill="#a2a2a2"/><path d="M21 0H33.500V8.500H21ZM21 10H24.500V12.500H21ZM25.500 10H29V12.500H25.500ZM30 10H33.500V12.500H30Z" fill="#b2b2b2"/></svg>
<svg style="left:952px;top:54px" width="13" height="12" viewBox="0 0 13 12"><path d="M0 0H4.500L3 1.500L5.500 4L4 5.500L1.500 3L0 4.500ZM13 0V4.500L11.500 3L9 5.500L7.500 4L10 1.500L8.500 0ZM0 12V7.500L1.500 9L4 6.500L5.500 8L3 10.500L4.500 12ZM13 12H8.500L10 10.500L7.500 8L9 6.500L11.500 9L13 7.500Z" fill="#bcbcbc"/></svg>
<div class="a hsep" style="left:973px;top:52px"></div>
<svg style="left:992.500px;top:57px" width="13" height="7" viewBox="0 0 13 7"><path d="M0 .5H7.500M0 3.500H7.500M0 6.500H7.500" stroke="#b8b8b8" stroke-width="1"/><path d="M9 2.500H13L11 5Z" fill="#b8b8b8"/></svg>
<div class="a" style="left:835.500px;top:130px;width:111.500px;height:22.500px;border-radius:3px;background:linear-gradient(#3e3e3e,#262626 50%,#1a1a1a);border:1px solid #161616;box-shadow:0 1px 2px rgba(0,0,0,.55)"></div>
<div class="t" style="left:846.500px;top:136px;font-size:10.300px;font-weight:bold;color:#f4f4f4;letter-spacing:.34px">Start My Webcam</div>

<!-- ======= Attendees pod ======= -->
<div class="a pod" style="left:767px;top:216px;width:249px;height:211px;background:#fff"></div>
<div class="a phead" style="left:767px;top:216px;width:249px"></div>
<div class="t ptitle" style="left:773px;top:222.500px">Attendees</div>
<div class="t" style="left:829px;top:223.500px;font-size:8.700px;color:#444;letter-spacing:.05px">(36)</div>
<svg style="left:992.500px;top:224px" width="13" height="7" viewBox="0 0 13 7"><path d="M0 .5H7.500M0 3.500H7.500M0 6.500H7.500" stroke="#555" stroke-width="1.400"/><path d="M8.800 2.300H13L10.900 5.200Z" fill="#555"/></svg>
<div class="a" style="left:767px;top:240px;width:249px;height:24px;background:linear-gradient(#e6e6e6,#dcdcdc);border-bottom:1px solid #9a9a9a"></div>
<div class="a" style="left:773px;top:242.500px;width:60px;height:19.500px;border:1px solid #8e8e8e;border-radius:3px;background:linear-gradient(#fdfdfd,#e2e2e2)"></div>
<div class="a" style="left:773px;top:242.500px;width:20.500px;height:19.500px;border:1px solid #6a6a6a;border-radius:3px 0 0 3px;background:linear-gradient(#6e6e6e,#8a8a8a)"></div>
<div class="a" style="left:812.500px;top:243.500px;width:1px;height:17.500px;background:#9a9a9a"></div>
<svg style="left:776px;top:246px" width="54" height="13" viewBox="0 0 54 13">
 <path d="M0 1H14.500M0 4.500H14.500M0 8H14.500M0 11.500H14.500" stroke="#cfcfcf" stroke-width="2"/>
 <path d="M21 1H25.500V4.500H21ZM30 1H34.500V4.500H30ZM21 8.500H25.500V12H21ZM30 8.500H34.500V12H30ZM25.700 4.700H29.800V8.300H25.700Z" fill="#444"/><path d="M24 3.500L31.500 10M31.500 3.500L24 10" stroke="#444" stroke-width="1.100"/>
 <circle cx="43.500" cy="3.200" r="2.300" fill="#444"/><path d="M39.500 10V8.500Q39.500 6.200 43.500 6.200Q47.500 6.200 47.500 8.500V10Z" fill="#444"/><path d="M48.500 5.500H53M48.500 8H53M48.500 10.500H53" stroke="#444" stroke-width="1"/>
</svg>
<div class="a" style="left:767px;top:264.500px;width:249px;height:18px;background:#e6e6e6;border-bottom:1px solid #9c9c9c"></div>
<svg style="left:773.500px;top:267.500px" width="13" height="13" viewBox="0 0 13 13"><path d="M2 1Q.5 2 1.200 5Q2.500 9.500 6 11.500Q7.500 12 8.300 10.500L6.800 8.500L5.500 9Q3.500 7 3.200 4.500L4.300 3.500L3.500 1Z" fill="#dfe9f2" stroke="#3f6f9a" stroke-width=".9"/><path d="M8 6.500Q9.500 6.500 9.500 8M8 4.500Q11.500 4.500 11.500 8" fill="none" stroke="#8a8a8a" stroke-width=".9"/></svg>
<div class="t" style="left:792px;top:270px;font-size:8.800px;font-style:italic;color:#7a7a7a;transform:scaleX(.905);transform-origin:0 0">Active Speakers</div>
<svg style="left:1000px;top:270px" width="10" height="10" viewBox="0 0 10 10"><circle cx="5" cy="5" r="4.600" fill="#7c7c7c"/><path d="M3.200 3.200L6.800 6.800M6.800 3.200L3.200 6.800" stroke="#f4f4f4" stroke-width="1.300"/></svg>
<div class="a" style="left:767px;top:282.5px;width:237px;height:17.500px;background:linear-gradient(#fbfbfb,#ececec 55%,#d9d9d9);border-bottom:1px solid #9a9a9a;border-top:1px solid #fff"></div>
<svg style="left:772.500px;top:289.0px" width="6" height="5" viewBox="0 0 6 5"><path d="M0 0H6L3 4.500Z" fill="#444"/></svg>
<div class="t" style="left:784.500px;top:286.5px;font-size:9.100px;color:#444">Hosts (2)</div>
<div class="a" style="left:767px;top:300px;width:237px;height:18px;background:#fff;border-bottom:1px solid #e4e4e4"></div>
<svg style="left:775.8px;top:303.3px" width="10.500" height="11.400" viewBox="0 0 12 13"><path d="M.8 12.500V9.500Q.8 6.800 3.500 6.500H8.500Q11.200 6.800 11.200 9.500V12.500Z" fill="#f2bf4f" stroke="#9a7a2a" stroke-width=".7"/><circle cx="6" cy="3.700" r="3" fill="#e6e0d4" stroke="#77705f" stroke-width=".7"/><path d="M4 7H8V10.500H4Z" fill="#4a463c"/><path d="M5 7.200L6 9L7 7.200" fill="#f4f4f4"/></svg>
<div class="t nm" style="left:795.500px;top:304.8px" dir="rtl">حاتم قرجی ده سرخی</div>
<div class="a" style="left:767px;top:317.5px;width:237px;height:18px;background:#f3f3f3;border-bottom:1px solid #e4e4e4"></div>
<svg style="left:775.8px;top:320.8px" width="10.500" height="11.400" viewBox="0 0 12 13"><path d="M.8 12.500V9.500Q.8 6.800 3.500 6.500H8.500Q11.200 6.800 11.200 9.500V12.500Z" fill="#f2bf4f" stroke="#9a7a2a" stroke-width=".7"/><circle cx="6" cy="3.700" r="3" fill="#e6e0d4" stroke="#77705f" stroke-width=".7"/><path d="M4 7H8V10.500H4Z" fill="#4a463c"/><path d="M5 7.200L6 9L7 7.200" fill="#f4f4f4"/></svg>
<div class="t nm" style="left:795.500px;top:322.3px" dir="rtl">مدیر سیستم</div>
<svg style="left:985.5px;top:320.5px" width="11" height="12" viewBox="0 0 11 12"><rect x="1" y="4.500" width="7.500" height="7" fill="#7d8ea8" stroke="#4a5568" stroke-width=".6"/><rect x="3.700" y="1" width="3" height="6" rx="1.500" fill="#e8ecf2" stroke="#555" stroke-width=".6"/><path d="M2.500 6.500Q2.500 9 5.200 9Q7.900 9 7.900 6.500M5.200 9V10.500" fill="none" stroke="#eee" stroke-width=".7"/><path d="M10.500 .5L1 11" stroke="#d8232a" stroke-width="1.500"/></svg>
<div class="a" style="left:767px;top:335px;width:237px;height:17.500px;background:linear-gradient(#fbfbfb,#ececec 55%,#d9d9d9);border-bottom:1px solid #9a9a9a;border-top:1px solid #fff"></div>
<svg style="left:773.500px;top:340.5px" width="5" height="6" viewBox="0 0 5 6"><path d="M0 0L4.500 3L0 6Z" fill="#9a9a9a"/></svg>
<div class="t" style="left:784.500px;top:339px;font-size:9.100px;color:#9a9a9a">Presenters (0)</div>
<div class="a" style="left:767px;top:352.5px;width:237px;height:17.500px;background:linear-gradient(#fbfbfb,#ececec 55%,#d9d9d9);border-bottom:1px solid #9a9a9a;border-top:1px solid #fff"></div>
<svg style="left:772.500px;top:359.0px" width="6" height="5" viewBox="0 0 6 5"><path d="M0 0H6L3 4.500Z" fill="#444"/></svg>
<div class="t" style="left:784.500px;top:356.5px;font-size:9.100px;color:#444">Participants (34)</div>
<div class="a" style="left:767px;top:370px;width:237px;height:18px;background:#fff;border-bottom:1px solid #e4e4e4"></div>
<svg style="left:775.8px;top:373.3px" width="10.500" height="11.400" viewBox="0 0 12 13"><path d="M.8 12.500V9.500Q.8 6.800 3.500 6.500H8.500Q11.200 6.800 11.200 9.500V12.500Z" fill="#f2bf4f" stroke="#9a7a2a" stroke-width=".7"/><circle cx="6" cy="3.700" r="3" fill="#e6e0d4" stroke="#77705f" stroke-width=".7"/><path d="M3.500 7.500Q6 9 8.500 7.500" fill="none" stroke="#fff3c8" stroke-width=".7"/></svg>
<div class="t nm" style="left:795.500px;top:374.8px" dir="rtl">احمد شریفی اردانی</div>
<div class="a" style="left:767px;top:387.5px;width:237px;height:18px;background:#f3f3f3;border-bottom:1px solid #e4e4e4"></div>
<svg style="left:775.8px;top:390.8px" width="10.500" height="11.400" viewBox="0 0 12 13"><path d="M.8 12.500V9.500Q.8 6.800 3.500 6.500H8.500Q11.200 6.800 11.200 9.500V12.500Z" fill="#f2bf4f" stroke="#9a7a2a" stroke-width=".7"/><circle cx="6" cy="3.700" r="3" fill="#e6e0d4" stroke="#77705f" stroke-width=".7"/><path d="M3.500 7.500Q6 9 8.500 7.500" fill="none" stroke="#fff3c8" stroke-width=".7"/></svg>
<div class="t nm" style="left:795.500px;top:392.3px" dir="rtl">حجت غلام زاده</div>
<svg style="left:985.5px;top:390.5px" width="11" height="12" viewBox="0 0 11 12"><rect x="1" y="4.500" width="7.500" height="7" fill="#7d8ea8" stroke="#4a5568" stroke-width=".6"/><rect x="3.700" y="1" width="3" height="6" rx="1.500" fill="#e8ecf2" stroke="#555" stroke-width=".6"/><path d="M2.500 6.500Q2.500 9 5.200 9Q7.900 9 7.900 6.500M5.200 9V10.500" fill="none" stroke="#eee" stroke-width=".7"/><path d="M10.500 .5L1 11" stroke="#d8232a" stroke-width="1.500"/></svg>
<div class="a" style="left:767px;top:405px;width:237px;height:18px;background:#fff;border-bottom:1px solid #e4e4e4"></div>
<svg style="left:775.8px;top:408.3px" width="10.500" height="11.400" viewBox="0 0 12 13"><path d="M.8 12.500V9.500Q.8 6.800 3.500 6.500H8.500Q11.200 6.800 11.200 9.500V12.500Z" fill="#f2bf4f" stroke="#9a7a2a" stroke-width=".7"/><circle cx="6" cy="3.700" r="3" fill="#e6e0d4" stroke="#77705f" stroke-width=".7"/><path d="M3.500 7.500Q6 9 8.500 7.500" fill="none" stroke="#fff3c8" stroke-width=".7"/></svg>
<div class="t nm" style="left:795.500px;top:409.8px" dir="rtl">حسن زارع زردینی</div>
<div class="a" style="left:767px;top:422.5px;width:237px;height:4.500px;background:#f3f3f3"></div>
<div class="a" style="left:774px;top:425px;width:13px;height:2px;overflow:hidden"><svg style="left:1.500px;top:0" width="12" height="13" viewBox="0 0 12 13"><circle cx="6" cy="3.700" r="3" fill="#e6e0d4" stroke="#77705f" stroke-width=".7"/></svg></div>
<div class="a" style="left:1004px;top:282.500px;width:12px;height:144.500px;background:#b6b6b6;border-left:1px solid #8f8f8f"></div>
<div class="a" style="left:1004.500px;top:283px;width:11.500px;height:28px;background:linear-gradient(90deg,#fdfdfd,#e9e9e9);border:1px solid #a0a0a0;border-top:0"></div>
<svg style="left:1008.500px;top:293.500px" width="3" height="5" viewBox="0 0 3 5"><path d="M0 1H3M0 3.500H3" stroke="#333" stroke-width="1"/></svg>

<!-- ======= Chat pod ======= -->
<div class="a pod" style="left:767px;top:433px;width:249px;height:140px;background:#efefef"></div>
<div class="a phead" style="left:767px;top:433px;width:249px"></div>
<div class="t ptitle" style="left:773px;top:439.500px">Chat</div>
<div class="t" style="left:802px;top:441px;font-size:8.400px;color:#444">(Everyone)</div>
<svg style="left:992.500px;top:441px" width="13" height="7" viewBox="0 0 13 7"><path d="M0 .5H7.500M0 3.500H7.500M0 6.500H7.500" stroke="#555" stroke-width="1.400"/><path d="M8.800 2.300H13L10.900 5.200Z" fill="#555"/></svg>
<div class="a" style="left:1004.500px;top:457.500px;width:11.500px;height:72px;background:#b4b4b4;border-left:1px solid #8a8a8a"></div>
<div class="a" style="left:1005px;top:522.500px;width:11px;height:7px;background:#f6f6f6;border:1px solid #9a9a9a"></div>
<svg style="left:1009px;top:524px" width="3" height="4" viewBox="0 0 3 4"><path d="M0 1H3L1.500 3.500Z" fill="#333"/><path d="M0 .3H3" stroke="#333" stroke-width=".6"/></svg>
<div class="t cn" style="left:773px;top:470.500px;transform:scaleX(.855)" dir="rtl">مهدیه السادات میررحیمی بیداخویدی</div>
<div class="t cm" style="left:881px;top:470.500px;transform:scaleX(.955)" dir="rtl">دل داده ها سوالات پژوهش کیفی استخرا :</div>
<div class="t cm" style="left:773px;top:482.500px" dir="rtl">ج نمیشود؟</div>
<div class="t cn" style="left:773px;top:499.500px;transform:scaleX(.80)" dir="rtl">محمدحسین مقوم</div>
<div class="t cm" style="left:822px;top:499.500px;transform:scaleX(1)" dir="rtl">شەۆقطع وصل م :</div>
<div class="a" style="left:767px;top:529.500px;width:249px;height:26.500px;background:#e7e7e7;border-top:1px solid #bdbdbd"></div>
<div class="a" style="left:773px;top:533.500px;width:210px;height:18px;background:#fff;border:1px solid #8f8f8f;border-radius:3px;box-shadow:inset 0 1px 1px rgba(0,0,0,.18)"></div>
<div class="a" style="left:985.500px;top:533.500px;width:23.500px;height:18px;border:1px solid #a4a4a4;border-radius:3px;background:linear-gradient(#f8f8f8,#dedede)"></div>
<svg style="left:991px;top:537px" width="13" height="11" viewBox="0 0 13 11"><ellipse cx="6.800" cy="4.500" rx="5.600" ry="3.900" fill="#e9e9e9" stroke="#6e6e6e" stroke-width=".9"/><path d="M3 7.300L1 10.300L5.200 8.200Z" fill="#e9e9e9" stroke="#6e6e6e" stroke-width=".8"/></svg>
<div class="a" style="left:767px;top:556px;width:249px;height:17px;border-top:1px solid #a8a8a8;background:#d2d2d2 repeating-linear-gradient(135deg,rgba(255,255,255,.55) 0,rgba(255,255,255,.55) 1px,transparent 1px,transparent 3px)"></div>
<div class="a" style="left:767px;top:556px;width:49.500px;height:17px;background:#f1f1f1;border-right:1px solid #a8a8a8"></div>
<div class="t" style="left:772.500px;top:559.500px;font-size:10px;color:#333;transform:scaleX(.86);transform-origin:0 0">Everyone</div>

<!-- ======= Layout bar ======= -->
<div class="a" style="left:1021px;top:44px;width:59px;height:533px;background:#383838;border-left:1px solid #272727"></div>
<div class="a" style="left:1022px;top:44px;width:58px;height:11px;background:#1f1f1f"></div>
<svg style="left:1027px;top:46.500px" width="50" height="7" viewBox="0 0 50 7"><path d="M0 1H6.500M0 3.500H6.500" stroke="#cfcfcf" stroke-width="1.100"/><path d="M8 2.500H11L9.500 4.500Z" fill="#cfcfcf"/><path d="M43.500 1L47.500 5.500M47.500 1L43.500 5.500" stroke="#d8d8d8" stroke-width="1.300"/></svg>
<div class="a" style="left:1026.500px;top:63px;width:47px;height:33.500px;background:#1f3f6d;border:2px solid #2f86ea;border-radius:1px"></div>
<svg style="left:1030px;top:68.500px" width="41" height="25" viewBox="0 0 41 25"><path d="M0 0H29.500V24.500H0ZM32 0H40.500V6.500H32ZM32 9H40.500V16H32ZM32 18.500H40.500V24.500H32Z" fill="#6f97cd" stroke="#87aee0" stroke-width=".6"/></svg>
<div class="t lb" style="left:1029.500px;top:101px">Sharing</div>
<div class="a" style="left:1028px;top:122px;width:44.500px;height:31.500px;background:#2c2c2c;border:1px solid #585858;border-top:2px solid #8a8a8a"></div>
<svg style="left:1030.500px;top:127px" width="40" height="24" viewBox="0 0 40 24"><path d="M0 0H29.500V13H0ZM31.500 0H40V23.700H31.500ZM0 15.500H13.500V23.700H0ZM15.500 15.500H29.500V23.700H15.500Z" fill="#aaaaaa"/></svg>
<div class="t lb" style="left:1029.500px;top:159.500px">Discussion</div>
<div class="a" style="left:1028px;top:180.500px;width:44.500px;height:30.500px;background:#2c2c2c;border:1px solid #585858;border-top:2px solid #8a8a8a"></div>
<svg style="left:1030.500px;top:185.500px" width="40" height="24" viewBox="0 0 40 24"><path d="M0 0H29.500V14.500H0ZM31.500 0H40V6H31.500ZM31.500 8.500H40V14.500H31.500ZM31.500 17H40V23H31.500ZM0 17H13.500V23H0ZM15.500 17H29.500V23H15.500Z" fill="#aaaaaa"/></svg>
<div class="t lb" style="left:1029.500px;top:217.300px">Collabo...</div>
<svg style="left:1030px;top:548.500px" width="41" height="15" viewBox="0 0 41 15"><path d="M1.500 1.500L12.500 13M12 1.500L1.500 13" stroke="#c9c9c9" stroke-width="2.400" stroke-linecap="round"/><path d="M9.500 0L13.500 1L14 4.500L11.500 5.500L9 3Z" fill="#c9c9c9"/><path d="M34.500 1V14M28 7.500H41" stroke="#c9c9c9" stroke-width="2.600"/></svg>

<!-- ======= Windows 7 taskbar ======= -->
<div class="a" style="left:0;top:574px;width:1080px;height:3px;background:#2a2a2a"></div>
<div id="tbar" class="a" style="left:0;top:577px;width:1080px;height:32px;background:linear-gradient(90deg,#a6bbd7 0,#a8bfdc 74.3%,#839ec3 77.3%,#7d98be 100%);border-top:1px solid #d2deec"></div>
<div class="a tb" style="left:195px;width:46.500px"></div>
<div class="a tb" style="left:490.500px;width:46.500px"></div>
<div class="a tb" style="left:687.500px;width:47px"></div>
<svg style="left:0;top:577px" width="1080" height="32" viewBox="0 0 1080 32">
 <circle cx="22" cy="15.500" r="13" fill="#235fa8" stroke="#dfeaf6" stroke-width="1"/><ellipse cx="22" cy="10" rx="10" ry="6.500" fill="#6db4e6" opacity=".75"/>
 <path d="M15 11Q18 9.500 21 11V15Q18 13.500 15 15Z" fill="#e8513a"/><path d="M22.500 11Q25.500 12.500 28.500 11V15Q25.500 16.500 22.500 15Z" fill="#7cc142"/><path d="M15 16.500Q18 15 21 16.500V20.500Q18 19 15 20.500Z" fill="#3e9be0"/><path d="M22.500 16.500Q25.500 18 28.500 16.500V20.500Q25.500 22 22.500 20.500Z" fill="#f9c22e"/>
 <!-- excel -->
 <path d="M59 7L72 5V26L59 24Z" fill="#1d6f42"/><rect x="69" y="7.500" width="12" height="16" fill="#fff" stroke="#1d6f42" stroke-width="1"/><path d="M72 10H80M72 13H80M72 16H80M72 19H80M76 8V23" stroke="#1d6f42" stroke-width=".8"/><path d="M62.500 11.500L68 19.500M68 11.500L62.500 19.500" stroke="#fff" stroke-width="1.800"/>
 <!-- explorer -->
 <path d="M108 8.500Q108 7 109.500 7H117L119 9.500H130.500Q132 9.500 132 11V25H108Z" fill="#e9c46a" stroke="#b48a2c" stroke-width=".7"/><path d="M109.500 6H128V12H109.500Z" fill="#f8f4e4"/><path d="M111 7.500H114" stroke="#3a9a4a" stroke-width="1.200"/><path d="M116 7.500H119" stroke="#d8402c" stroke-width="1.200"/><path d="M108 12.500H132.500V26.500H108Z" fill="#f6dc8e" stroke="#c79a3a" stroke-width=".7"/><path d="M111 27V20.500Q111 18.500 113 18.500H127Q129 18.500 129 20.500V27" fill="none" stroke="#5aa8e0" stroke-width="2.600"/>
 <!-- media player -->
 <rect x="161" y="7" width="18" height="18" fill="#a8cdf0" stroke="#5a8ec8" stroke-width=".8"/><rect x="158.500" y="9" width="17" height="17" fill="#d6e8f8" stroke="#5a8ec8" stroke-width=".8"/><circle cx="167" cy="17.500" r="7" fill="#f08a1c" stroke="#fbd9a8" stroke-width="1.200"/><path d="M165 13.500L171 17.500L165 21.500Z" fill="#fff"/>
 <!-- chrome -->
 <circle cx="218" cy="16" r="12" fill="#e8453c"/><path d="M218 16L207.600 10A12 12 0 0 0 213.500 27.100Z" fill="#34a853"/><path d="M218 16L213.500 27.100A12 12 0 0 0 229.600 12.500H218Z" fill="#fbbc05"/><circle cx="218" cy="16" r="5.600" fill="#fff"/><circle cx="218" cy="16" r="4.400" fill="#4285f4"/>
 <!-- ie -->
 <ellipse cx="268" cy="16" rx="13" ry="4.600" fill="none" stroke="#f2c12e" stroke-width="1.700" transform="rotate(-33 268 16)"/>
 <path d="M262.500 15.500H273.800Q273 10.800 268.300 10.800Q263.600 10.800 262.500 15.500ZM258 17.300Q258 7 268.300 7Q278.500 7 278.500 18.500H262.500Q263.300 22.700 268.300 22.700Q271.500 22.700 273 20.500H278Q275.800 26.500 268.300 26.500Q258 26.500 258 17.300Z" fill="#2f9fe6" stroke="#1b6fb8" stroke-width=".5"/>
 <path d="M257.500 24.500Q254 21.500 259.500 14.500" fill="none" stroke="#f2c12e" stroke-width="1.700"/>
 <!-- word -->
 <rect x="312" y="7" width="17" height="19" fill="#fff" stroke="#2b579a" stroke-width=".9"/><path d="M320 10.500H327M320 13.500H327M320 16.500H327M320 19.500H327M320 22.500H327" stroke="#2b579a" stroke-width="1"/><path d="M304.500 7L319 5V28L304.500 26Z" fill="#2b579a"/><path d="M307 12L309 21L311.500 13.500L314 21L316 12" fill="none" stroke="#fff" stroke-width="1.500"/>
 <!-- powerpoint -->
 <rect x="362" y="7" width="16" height="19" fill="#fff" stroke="#d24726" stroke-width=".9"/><circle cx="371.500" cy="13.500" r="4" fill="none" stroke="#d24726" stroke-width="1.400"/><path d="M366 20.500H376M366 23H376" stroke="#d24726" stroke-width="1"/><path d="M354 7L368 5V28L354 26Z" fill="#d24726"/><path d="M358.500 21.500V11.500H362Q364.500 11.500 364.500 14.200Q364.500 17 362 17H358.500" fill="none" stroke="#fff" stroke-width="1.700"/>
 <!-- visual studio -->
 <path d="M402.500 6L415 16.500L402.500 27Z" fill="#6a3fa0"/><path d="M427.500 6L415 16.500L427.500 27Z" fill="#cfc3e6" stroke="#8a6cc0" stroke-width=".7"/><path d="M402.500 9L411 16.500L402.500 24Z" fill="#8a5cc8"/>
 <!-- calculator -->
 <rect x="456.500" y="5.500" width="16" height="22" rx="1.500" fill="#dfeaf6" stroke="#7f9cc0" stroke-width=".9"/><rect x="458.500" y="7.500" width="12" height="5" fill="#bfe0f8" stroke="#6b8cb4" stroke-width=".6"/><path d="M459 15H462V17.500H459ZM463.200 15H466.200V17.500H463.200ZM467.400 15H470.400V17.500H467.400ZM459 18.800H462V21.300H459ZM463.200 18.800H466.200V21.300H463.200ZM459 22.600H462V25.100H459ZM463.200 22.600H466.200V25.100H463.200Z" fill="#8fb0dc"/><path d="M467.400 18.800H470.400V25.100H467.400Z" fill="#f0a63c"/>
 <!-- firefox -->
 <circle cx="513.700" cy="17" r="11.500" fill="#ff9a1f"/><path d="M503 12Q506 4.500 512 6.500Q510 8.500 511 10.500Q516 5 522 9.500Q526.500 14.500 524.500 21Q521 28.500 513.500 28.500Q505 28 502.500 20Q501.500 15.500 503 12Z" fill="#ff7a1a"/><path d="M504 21Q507 28.500 515 28Q523 27 525 19Q524 24 518 25.500Q510 27 504 21Z" fill="#e6285a"/><circle cx="514" cy="17.500" r="5.600" fill="#7a3ee0"/><path d="M508.500 14.500Q511 11.500 515.500 12.500Q512.500 13.500 512.500 16Q510.500 16.500 508.500 14.500Z" fill="#ffc830"/>
 <!-- opera -->
 <ellipse cx="563" cy="16.500" rx="11.500" ry="12" fill="#e3202e"/><ellipse cx="563" cy="16.500" rx="5" ry="8.800" fill="#a9bdd7"/>
 <!-- nox -->
 <path d="M613 3L624.500 9.500V22.500L613 29L601.500 22.500V9.500Z" fill="#1a1c2c" stroke="#7a4ad8" stroke-width="1"/><path d="M613 3L624.500 9.500V16" fill="none" stroke="#27c4d8" stroke-width="1"/>
 <!-- paint -->
 <path d="M651 19Q650 10.500 660 9Q669 8.500 669.500 16Q669.500 20 665 19.500Q662 19.500 663 22.500Q663.500 26.500 658.500 26Q652 25 651 19Z" fill="#e6eef6" stroke="#8a9ab0" stroke-width=".8"/><circle cx="655.500" cy="16" r="1.800" fill="#e8453c"/><circle cx="660" cy="12.500" r="1.800" fill="#3e9be0"/><circle cx="665" cy="14" r="1.800" fill="#7cc142"/><circle cx="656.500" cy="21" r="1.800" fill="#f9c22e"/><path d="M664 25L671.500 8.500L674 6L673.500 9.500L666.500 26Z" fill="#c98a4a" stroke="#8a5a2a" stroke-width=".5"/>
 <!-- adobe connect -->
 <rect x="699.500" y="4.500" width="22.500" height="21.500" fill="#12382a" stroke="#4aa07a" stroke-width="1.200"/><path d="M704.500 9H708.500V13H704.500ZM704.500 17.500H708.500V21.500H704.500ZM714.500 8.500L718.500 11V19.500L714.500 22" fill="#8fe0b0" stroke="#8fe0b0" stroke-width="1.300"/><path d="M708.500 11L714.500 15.500L708.500 19.500M711 8V23" stroke="#8fe0b0" stroke-width="1.300" fill="none"/>
 <!-- tray -->
 <rect x="861" y="12" width="11.500" height="6.500" rx="1" fill="#d9dde2" stroke="#8a93a0" stroke-width=".7"/><path d="M862.500 14H871M862.500 16H871" stroke="#8a93a0" stroke-width=".8" stroke-dasharray="1.200 .8"/>
 <circle cx="883.700" cy="15" r="6" fill="#1f4fc4" stroke="#dfe8f8" stroke-width="1"/>
 <path d="M898.500 9.500H903.500V12.500H898.500ZM900.500 8H905V11" fill="none" stroke="#f0f4f8" stroke-width=".9"/><path d="M899.500 17H903.500L901.500 19.500Z" fill="#f0f4f8"/>
 <path d="M913.500 17.500L916.700 13.500L920 17.500Z" fill="#f4f7fa"/>
 <rect x="930" y="9" width="6" height="5" fill="#e8eef4" stroke="#3a4654" stroke-width=".8"/><rect x="933.500" y="12.500" width="7.500" height="6" fill="#dfe8f0" stroke="#2a3644" stroke-width=".9"/><path d="M935 20.500H940M937.500 18.500V20.500" stroke="#2a3644" stroke-width="1"/>
 <path d="M949.500 8.500V22" stroke="#3a4654" stroke-width="1.200"/><path d="M950 9Q953 7.500 955.500 9Q957.500 10 959 9V15.500Q957.500 16.500 955.500 15.500Q953 14 950 15.500Z" fill="#f4f6f8" stroke="#5a6674" stroke-width=".6"/><circle cx="957.500" cy="18.500" r="3.600" fill="#e0352b"/><path d="M955.800 16.800L959.200 20.200M959.200 16.800L955.800 20.200" stroke="#fff" stroke-width="1.100"/>
 <rect x="967" y="10.500" width="13" height="12.500" fill="#d81e2a"/><path d="M969.500 19.500Q971.500 12.500 975 13Q977.500 13.500 975.500 17Q974 19.500 971.500 18.500M975.500 17L978.500 20.500" fill="none" stroke="#fff" stroke-width="1.300"/>
 <path d="M986.500 14H989L992.500 10.500V21.500L989 18H986.500Z" fill="#f4f6f8" stroke="#6a7684" stroke-width=".5"/><path d="M994.200 13Q995.800 16 994.200 19M996.200 11.200Q998.800 16 996.200 20.800" fill="none" stroke="#f4f6f8" stroke-width="1"/>
 <rect x="1069" y="1" width="11" height="31" fill="rgba(255,255,255,.22)" stroke="rgba(60,80,110,.6)" stroke-width=".8"/>
</svg>
<div class="t" style="left:880.700px;top:587px;font-size:10px;font-weight:bold;color:#fff">?</div>
<div class="t" style="left:603.500px;top:586.500px;font-size:11px;font-weight:bold;color:#eafcff;letter-spacing:-.3px">nox</div>
<div class="t" style="left:843.500px;top:586.500px;font-size:10.500px;color:#f4f6fa;transform:scaleX(.9);transform-origin:0 0">FA</div>
<div class="t" style="left:1017px;top:582.500px;font-size:9.300px;color:#fff;direction:ltr">09:31 <span dir="rtl" style="font-size:6.800px">ب.ظ</span></div>
<div class="t" style="left:1014px;top:595.500px;font-size:9.200px;color:#fff;font-family:'DejaVu Sans',sans-serif;direction:ltr">۲۰۲۰/۰۸/۱۲</div>
<!-- watermark -->
<div class="a" style="left:0;top:583.500px;width:75px;height:17px;background:rgba(20,20,20,.78)"></div>
<div class="t" style="left:5px;top:586.500px;font-size:11px;font-weight:bold;font-style:italic;color:#fff;letter-spacing:-.1px">yazd<span style="color:#f39a1e">.cfu.ac.ir</span></div>

</body>
</html>
